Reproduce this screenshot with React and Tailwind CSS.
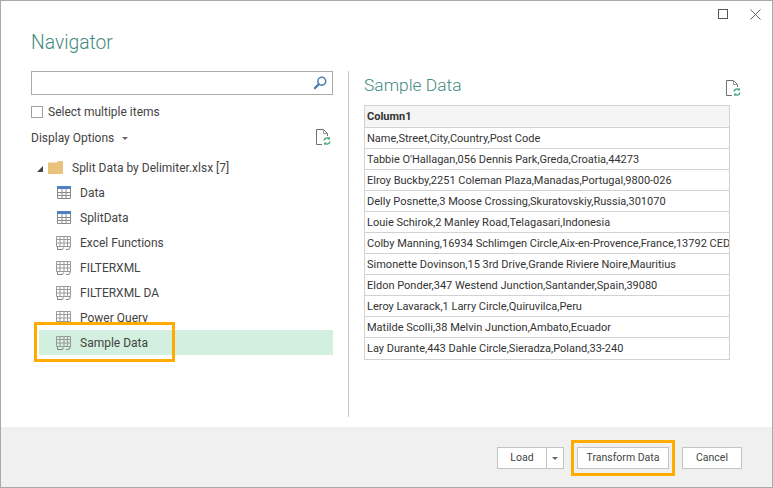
const font = { fontFamily: 'Roboto, "Open Sans", sans-serif' };

function Refresh({ className }) {
  return (
    <svg width="16" height="17" viewBox="0 0 16 17" className={className} fill="none">
      <path d="M1.5 .5H8.5L12.5 4.5V7M1.5 .5V15.5H7" stroke="#707070" />
      <path d="M8.5 .5V4.5H12.5" stroke="#9a9a9a" />
      <path d="M9 11.5a3.2 3.2 0 0 1 5.3-1.8M15 12.5a3.2 3.2 0 0 1-5.3 1.8" stroke="#3f9f73" strokeWidth="1.4" />
      <path d="M14.8 7.8v2.6h-2.6zM9.2 16.2v-2.6h2.6z" fill="#3f9f73" />
    </svg>
  );
}

function BlueTable() {
  return (
    <svg width="14" height="13" viewBox="0 0 14 13" fill="none">
      <rect x="0" y="0" width="14" height="3" fill="#4f81bd" />
      <path d="M.5 3V12.5H13.5V3M.5 6.5H13.5M.5 9.5H13.5M5 3V12.5M9 3V12.5" stroke="#8a8a8a" />
    </svg>
  );
}

function Sheet() {
  return (
    <svg width="16" height="14" viewBox="0 0 16 14" fill="none">
      <path d="M.5 .5H14.5V10.5H.5ZM.5 3.5H14.5M.5 7H14.5M4 .5V10.5M8 .5V10.5M11.5 .5V10.5" stroke="#999999" />
      <path d="M1.5 10.5V13.5H6.5L7.5 11.5M14 10.5V12C14 13 13 13.5 10 13.5" stroke="#808080" />
    </svg>
  );
}

const rows = [
  "Name,Street,City,Country,Post Code",
  "Tabbie O'Hallagan,056 Dennis Park,Greda,Croatia,44273",
  "Elroy Buckby,2251 Coleman Plaza,Manadas,Portugal,9800-026",
  "Delly Posnette,3 Moose Crossing,Skuratovskiy,Russia,301070",
  "Louie Schirok,2 Manley Road,Telagasari,Indonesia",
  "Colby Manning,16934 Schlimgen Circle,Aix-en-Provence,France,13792 CEDEX 3",
  "Simonette Dovinson,15 3rd Drive,Grande Riviere Noire,Mauritius",
  "Eldon Ponder,347 Westend Junction,Santander,Spain,39080",
  "Leroy Lavarack,1 Larry Circle,Quiruvilca,Peru",
  "Matilde Scolli,38 Melvin Junction,Ambato,Ecuador",
  "Lay Durante,443 Dahle Circle,Sieradza,Poland,33-240",
];

const tree = [
  ["Data", "t"],
  ["SplitData", "t"],
  ["Excel Functions", "s"],
  ["FILTERXML", "s"],
  ["FILTERXML DA", "s"],
  ["Power Query", "s"],
];

export default function App() {
  return (
    <div style={font} className="w-[773px] h-[488px] flex flex-col bg-white border border-[#a9a9a9] text-[12px] text-[#444] overflow-hidden">
      <div className="flex justify-end items-center gap-[22px] h-[28px] pr-[11px] pb-[2px]">
        <div className="w-[10px] h-[10px] border border-[#555]" />
        <svg width="11" height="11" viewBox="0 0 11 11" fill="none"><path d="M.5 .5L10.5 10.5M10.5 .5L.5 10.5" stroke="#666" /></svg>
      </div>
      <div className="flex-1 flex min-h-0">
        <div className="w-[347px] pl-[30px] flex flex-col">
          <div className="text-[19.3px] leading-[28px] font-light text-[#3f8b80] h-[42px]">Navigator</div>
          <div className="w-[302px] h-[24px] border border-[#ababab] flex items-center justify-end pr-[5px]">
            <svg width="14" height="14" viewBox="0 0 14 14" fill="none">
              <circle cx="8.8" cy="5.2" r="3.9" stroke="#4a7fb5" strokeWidth="1.6" />
              <path d="M6 8L1.3 12.7" stroke="#3f77b0" strokeWidth="2.2" />
            </svg>
          </div>
          <div className="flex items-center gap-[5px] h-[18px] mt-[8px]">
            <div className="w-[12px] h-[12px] border border-[#a0a0a0]" />
            <span>Select multiple items</span>
          </div>
          <div className="flex items-center justify-between w-[302px] h-[20px] mt-[7px]">
            <div className="flex items-center gap-[8px]">
              <span>Display Options</span>
              <div className="w-0 h-0 border-l-[3px] border-r-[3px] border-t-[3px] border-l-transparent border-r-transparent border-t-[#666]" />
            </div>
            <Refresh className="mr-[2px] -mt-[1px]" />
          </div>
          <div className="flex items-center h-[25px] mt-[7px] pl-[6px] w-[302px]">
            <svg width="6" height="6" viewBox="0 0 6 6" className="mt-[2px]"><path d="M6 0V6H0Z" fill="#444" /></svg>
            <svg width="15" height="13" viewBox="0 0 15 13" className="ml-[5px]"><path d="M0 1.5H9L10 0H15V13H0Z" fill="#e9c27e" /></svg>
            <span className="ml-[9px]">Split Data by Delimiter.xlsx [7]</span>
          </div>
          {tree.map(([name, kind]) => (
            <div key={name} className="flex items-center h-[25px]">
              <div className="w-[24px] ml-[25px]">
                <div className="w-[16px] flex justify-center">
                  {kind === "t" ? <BlueTable /> : <Sheet />}
                </div>
              </div>
              <span>{name}</span>
            </div>
          ))}
          <div className="relative flex items-center h-[25px] w-[294px] ml-[8px] bg-[#d3efe0]">
            <div className="w-[24px] ml-[17px]"><Sheet /></div>
            <span>Sample Data</span>
            <div className="absolute left-[-5px] top-[-8px] w-[141px] h-[40px] border-[3px] border-[#ffab00]" />
          </div>
        </div>
        <div className="w-px h-[346px] mt-[42px] bg-[#c8c8c8]" />
        <div className="flex-1 pl-[15px] flex flex-col">
          <div className="flex items-start justify-between w-[366px] h-[76px] pt-[42px]">
            <div className="text-[17.4px] leading-[28px] font-light text-[#3f8b80]">Sample Data</div>
            <Refresh className="mt-[9px] -mr-[11px]" />
          </div>
          <div className="w-[366px] border border-[#d2d2d2] text-[#333] text-[11px]">
            <div className="h-[22px] bg-[#f5f5f5] border-b border-[#d2d2d2] px-[2px] font-bold leading-[21px]">Column1</div>
            {rows.map((r) => (
              <div key={r} className="h-[21px] border-b last:border-b-0 border-[#d2d2d2] px-[2px] leading-[21px] whitespace-nowrap overflow-hidden">{r}</div>
            ))}
          </div>
        </div>
      </div>
      <div className="h-[60px] bg-[#f0f0f0] flex items-center justify-end pr-[30px] gap-[7px] pt-[2px] text-[10.5px]">
        <div className="flex h-[22px] border border-[#c4c4c4] bg-white">
          <div className="w-[49px] flex items-center justify-center border-r border-[#c4c4c4]">Load</div>
          <div className="w-[16px] flex items-center justify-center">
            <div className="w-0 h-0 border-l-[3px] border-r-[3px] border-t-[3px] border-l-transparent border-r-transparent border-t-[#666]" />
          </div>
        </div>
        <div className="border-[3px] border-[#ffab00] py-[4px] px-[3px]">
          <div className="w-[92px] h-[22px] border border-[#c4c4c4] bg-white flex items-center justify-center whitespace-nowrap">Transform Data</div>
        </div>
        <div className="w-[60px] h-[22px] border border-[#c4c4c4] bg-white flex items-center justify-center">Cancel</div>
      </div>
    </div>
  );
}
